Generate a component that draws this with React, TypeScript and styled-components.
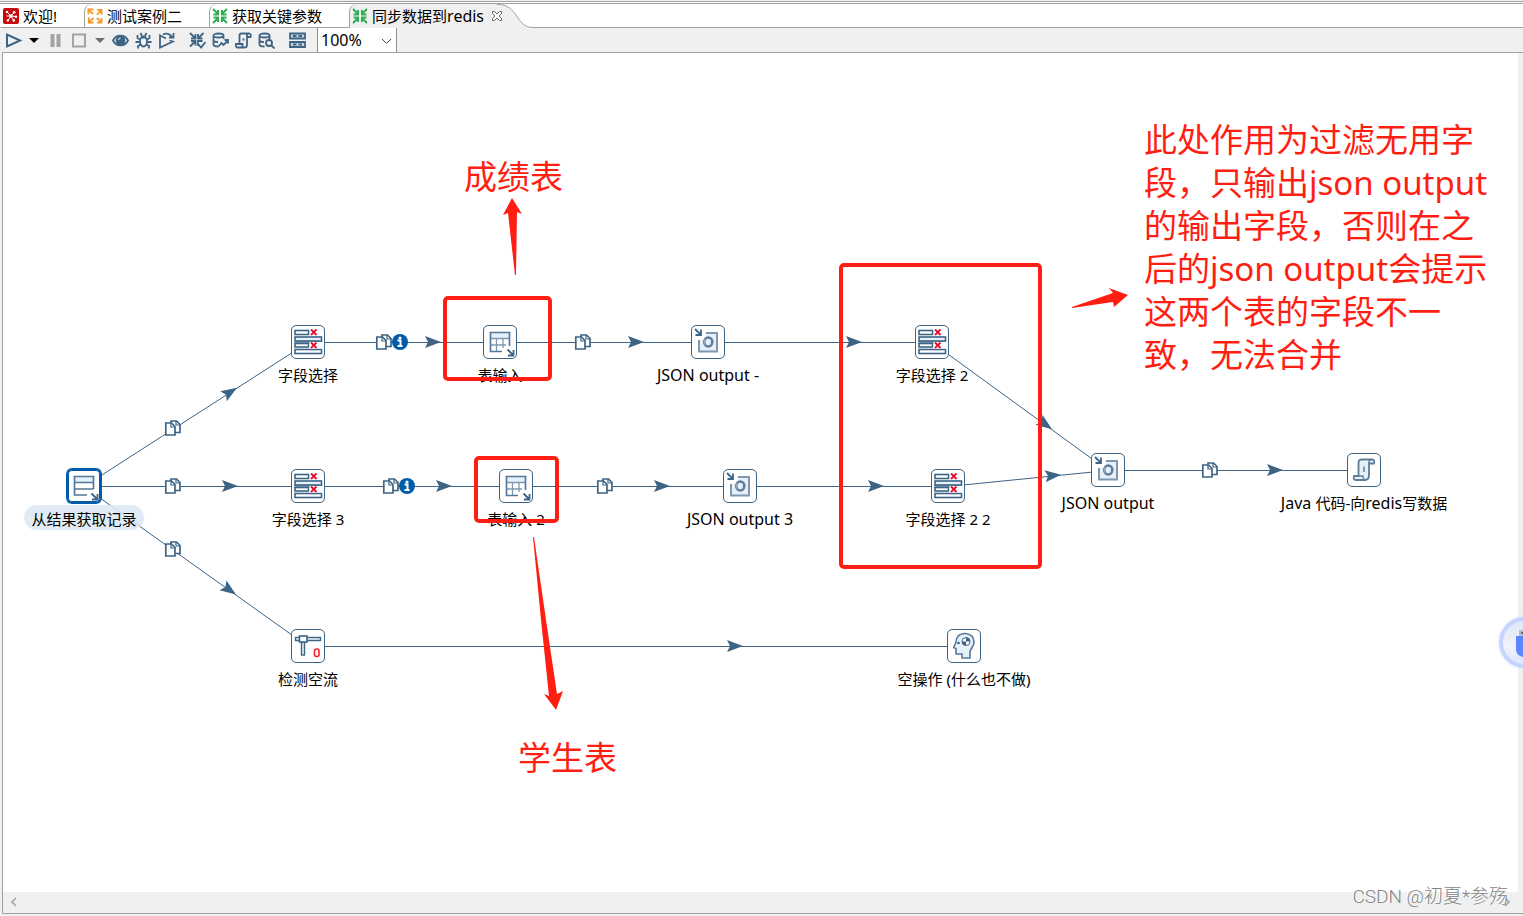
import React from "react";
import styled, { createGlobalStyle } from "styled-components";

const ink = "#3d6485";
const pale = "#e6f0f8";
const soft = "#7f9ab0";
const red = "#ff1e12";
const face = "#f0f0f0";
const rule = "#a0a0a5";

const GlobalStyle = createGlobalStyle`
  *, *::before, *::after { box-sizing: border-box; }
  body {
    margin: 0;
    background: ${face};
    color: #000;
    font-family: "Noto Sans", "Noto Sans CJK SC", sans-serif;
    font-size: 15px;
  }
  button, select { font: inherit; color: inherit; }
`;

/* ---------- window frame ---------- */

const Window = styled.div`
  position: relative;
  display: flex;
  flex-direction: column;
  min-height: 100vh;
  overflow: hidden;
  background: ${face};
`;

const TopEdge = styled.div`
  height: 3px;
  border-bottom: 1px solid #fff;
  background: linear-gradient(${face} 1px, ${rule} 1px);
`;

const TabStrip = styled.div`
  display: flex;
  height: 25px;
  background: #fff;
  border-top: 1px solid ${rule};
`;

const Tab = styled.button<{ $first?: boolean }>`
  display: flex;
  align-items: center;
  gap: 4px;
  height: 24px;
  padding: 0 27px 0 2px;
  border: 0;
  border-left: 1px solid ${(p) => (p.$first ? "transparent" : rule)};
  border-bottom: 1px solid ${rule};
  border-top-left-radius: ${(p) => (p.$first ? "0" : "8px")};
  background: #fff;
  line-height: 24px;
  white-space: nowrap;
`;

const ActiveTab = styled.div`
  display: flex;
  background: ${face};
  border-left: 1px solid ${rule};
  border-top-left-radius: 8px;
`;

const ActiveTabButton = styled(Tab)`
  padding-right: 7px;
  border: 0;
  background: none;
`;

const CloseButton = styled.button`
  display: flex;
  align-items: center;
  width: 12px;
  padding: 0;
  border: 0;
  background: none;
`;

const TabTail = styled.svg`
  display: block;
  margin-left: -6px;
  pointer-events: none;
`;

const StripRest = styled.div`
  flex: 1;
  border-bottom: 1px solid ${rule};
`;

const TailWrap = styled.div`
  display: flex;
  background: #fff;
`;

const Latin = styled.span`
  font-size: 16px;
`;

/* ---------- toolbar ---------- */

const Toolbar = styled.div`
  display: flex;
  align-items: stretch;
  height: 24px;
`;

const Group = styled.div`
  display: flex;
  margin-right: 8px;
`;

const RunGroup = styled(Group)`
  margin-right: 0;
`;

const ToolButton = styled.button<{ $w?: number }>`
  display: flex;
  align-items: center;
  justify-content: center;
  width: ${(p) => p.$w ?? 23}px;
  padding: 1px 0 0;
  border: 0;
  background: none;
`;

const ZoomBox = styled.label`
  position: relative;
  display: flex;
  width: 80px;
  border: 1px solid #8a8f96;
  border-width: 0 1px;
  background: #fff;
`;

const ZoomSelect = styled.select`
  flex: 1;
  padding: 0 0 0 3px;
  border: 0;
  appearance: none;
  background: none;
  font-size: 16px;
  line-height: 24px;
  outline: none;
`;

const ZoomArrow = styled.svg`
  position: absolute;
  right: 4px;
  top: 10px;
  pointer-events: none;
`;

/* ---------- work area ---------- */

const Work = styled.div`
  display: flex;
  flex: 1;
  flex-direction: column;
  margin: 0 0 2px 2px;
  border: 1px solid ${rule};
  border-right: 0;
`;

const CanvasRow = styled.div`
  display: flex;
  flex: 1;
`;

const Canvas = styled.main`
  position: relative;
  flex: 1;
  min-height: 680px;
  overflow: hidden;
  background: #fff;
`;

const SideScroll = styled.div`
  width: 5px;
  background: ${face};
`;

const BottomScroll = styled.div`
  display: flex;
  justify-content: space-between;
  height: 21px;
  padding: 0 12px 2px 7px;
  background: ${face};
`;

const ScrollButton = styled.button`
  display: flex;
  align-items: center;
  padding: 0;
  border: 0;
  background: none;
`;

const Drawing = styled.svg`
  position: absolute;
  inset: 0;
  width: 100%;
  height: 100%;
  pointer-events: none;
`;

const StepBox = styled.div<{ $x: number; $y: number }>`
  position: absolute;
  left: ${(p) => p.$x - 100}px;
  top: ${(p) => p.$y - 17}px;
  display: flex;
  flex-direction: column;
  align-items: center;
  gap: 2px;
  width: 200px;
`;

const StepIcon = styled.div<{ $selected?: boolean }>`
  width: 34px;
  height: 34px;
  border: 1px solid ${(p) => (p.$selected ? "#005ca8" : ink)};
  border-radius: 5px;
  background: #fff;
  box-shadow: ${(p) => (p.$selected ? "0 0 0 1px #005ca8, inset 0 0 0 1px #005ca8" : "none")};

  svg {
    display: block;
    margin: -1px;
  }
`;

const StepLabel = styled.div<{ $selected?: boolean }>`
  height: 25px;
  padding: 2px 7px 0;
  border-radius: 13px;
  background: ${(p) => (p.$selected ? "rgba(220, 232, 243, 0.86)" : "none")};
  line-height: 25px;
  white-space: nowrap;
`;

const Note = styled.p<{ $x: number; $y: number }>`
  position: absolute;
  left: ${(p) => p.$x}px;
  top: ${(p) => p.$y}px;
  margin: 0;
  color: ${red};
  font-size: 33px;
  line-height: 43px;
  white-space: nowrap;
`;

const Watermark = styled.div`
  position: absolute;
  right: 15px;
  bottom: 6px;
  color: #858585;
  font-family: Roboto, "Noto Sans CJK SC", sans-serif;
  font-size: 19px;
  font-weight: 300;
  line-height: 26px;
  text-shadow: -1px -1px 0 #fff;
  white-space: nowrap;
`;

const FloatBall = styled.button`
  position: absolute;
  right: -27px;
  top: 617px;
  width: 51px;
  height: 51px;
  padding: 0;
  border: 4px solid #c6d4fd;
  border-radius: 50%;
  background: linear-gradient(#e0e7fa, #f0f2fb 60%, #dce5ff);
  box-shadow: 0 0 3px #d6e0ff;
  overflow: hidden;

  svg { display: block; }
`;

/* ---------- small drawings ---------- */

const WelcomeIcon = () => (
  <svg width="16" height="16" viewBox="0 0 16 16">
    <rect width="16" height="16" rx="2" fill="#c9090d" />
    <path d="M8 8 4 4M8 8 11 4.500M8 8 13 8.500M8 8 10.500 12M8 8 5 12.500M8 8 3.500 8" stroke="#fff" strokeWidth="1" />
    <g fill="#fff">
      <circle cx="4" cy="4" r="1.300" />
      <circle cx="11.200" cy="4.200" r="1.300" />
      <circle cx="13" cy="8.700" r="1.200" />
      <circle cx="10.800" cy="12.400" r="1.300" />
      <circle cx="4.800" cy="12.400" r="1.200" />
      <circle cx="8" cy="8" r="1.700" />
    </g>
  </svg>
);

const JobIcon = () => (
  <svg width="16" height="16" viewBox="0 0 17 17" fill="none" stroke="#f59a23" strokeWidth="2">
    <path d="M1 6.500h5.500V1M6.500 6.500 1.500 1.500" transform="rotate(180 4 4)" />
    <path d="M10.500 2H15.500v5M15.500 2l-5 5M2 10v5.500h5M2 15.500l5-5M15.500 10.500v5h-5M15.500 15.500l-5-5" />
  </svg>
);

const TransIcon = () => (
  <svg width="16" height="16" viewBox="0 0 16 16" fill="none" stroke="#2fae54" strokeWidth="2">
    <path d="M1 1l5 5M6 2v4.500H1.500M15 1l-5 5M10 2v4.500h4.500M1 15l5-5M6 14V9.500H1.500M15 15l-5-5M10 14V9.500h4.500" />
  </svg>
);

const Tool = ({ children }: { children: React.ReactNode }) => (
  <svg width="17" height="17" viewBox="0 0 17 17" fill="none" stroke={ink} strokeWidth="1.800">
    {children}
  </svg>
);

const Caret = ({ color }: { color: string }) => (
  <svg width="10" height="5" viewBox="0 0 10 5">
    <path d="M0 0h10L5 5z" fill={color} />
  </svg>
);

const dbBody =
  "M1.500 3.500v9c0 1 2 2 5 2M1.500 3.500c0-1.200 2.300-2 5-2s5 .8 5 2-2.300 2-5 2-5-.8-5-2zM1.500 8c0 1 2 2 4.500 2M11.500 3.500V7";

/* ---------- step pictures, each in a 34 x 34 frame ---------- */

const Frame = ({ children }: { children: React.ReactNode }) => (
  <svg width="34" height="34" viewBox="0 0 34 34" fill="none" stroke={ink}>
    {children}
  </svg>
);

const OutArrow = ({ x, y }: { x: number; y: number }) => (
  <path d={`M${x} ${y}l5.500 5.500M${x + 6} ${y + 0.5}v5.500h-5.500`} strokeWidth="1.800" />
);

const SelectFields = () => (
  <Frame>
    <rect x="3.500" y="16" width="27" height="3" fill={soft} stroke="none" />
    <g strokeWidth="1.600">
      <rect x="4" y="5.500" width="13.500" height="4" fill="#fff" />
      <rect x="4" y="12" width="26.500" height="4" fill={pale} />
      <rect x="4" y="18.500" width="13.500" height="3.500" fill="#fff" />
      <rect x="4" y="24.500" width="26.500" height="4" fill="#fff" />
    </g>
    <rect x="18.500" y="17" width="13" height="6.500" fill="#fff" stroke="none" />
    <path d="M20 4.500l5.500 5.500M25.500 4.500l-5.500 5.500M20 17.500l5.500 5.500M25.500 17.500l-5.500 5.500" stroke="#e8112d" strokeWidth="1.900" />
  </Frame>
);

const TableInput = () => (
  <Frame>
    <rect x="7.500" y="7.500" width="19" height="6" fill={pale} stroke="none" />
    <path d="M7.500 13.500h19M7.500 20H23M13.500 13.500v13M20 13.500V23" stroke={soft} strokeWidth="1.300" />
    <path d="M19 26.500H7.500v-19h19V21" stroke="#56789a" strokeWidth="1.700" />
    <OutArrow x={24.500} y={24.500} />
  </Frame>
);

const ResultRows = () => (
  <Frame>
    <rect x="7.500" y="7.500" width="19" height="6" fill={pale} stroke="none" />
    <path d="M7.500 13.500h19M7.500 20h19" stroke="#56789a" strokeWidth="1.300" />
    <path d="M20 26H7.500V7.500h19V20" stroke="#56789a" strokeWidth="1.700" />
    <OutArrow x={24.500} y={24.500} />
  </Frame>
);

const JsonOutput = () => (
  <Frame>
    <path d="M8 14.500V26.500H26V8H15l-2 6.500z" fill={pale} stroke="none" />
    <path d="M8 15v11.500h18V8H15" stroke={soft} strokeWidth="2" />
    <ellipse cx="17.300" cy="17" rx="4" ry="4.500" stroke="#5f7d96" strokeWidth="2.600" />
    <path d="M15 13.800c-2 1.500-2 5 0 6.500" stroke="#a9bac8" strokeWidth="1" />
    <OutArrow x={4} y={4} />
  </Frame>
);

const JavaCode = () => (
  <Frame>
    <path
      d="M11.500 23V10q0-3.500 3.500-3.500h10.500q2.500.5 1.500 4h-5V22q0 5-4 5H8.500q-2.500-.5-1.500-4z"
      fill={pale}
      stroke="#5d7d98"
      strokeWidth="1.800"
    />
    <path d="M22 10.500q-.5-3 2.500-4M7 23h9q0 4 3 4" stroke="#5d7d98" strokeWidth="1.300" />
    <path d="M17 13.500v5.500" strokeWidth="1.200" />
  </Frame>
);

const DetectEmpty = () => (
  <Frame>
    <rect x="4.500" y="8.500" width="25" height="3" fill={pale} strokeWidth="1.400" />
    <rect x="10.500" y="13" width="3" height="13" fill={pale} strokeWidth="1.400" />
    <rect x="8.500" y="7" width="7.500" height="6" fill="#fff" strokeWidth="1.600" />
    <rect x="23.500" y="20" width="4.500" height="7.500" rx="2" stroke="#f0202c" strokeWidth="1.600" />
  </Frame>
);

const DoNothing = () => (
  <Frame>
    <path
      d="M23 29v-6c0-3 4-5 4-10 0-5-3.500-8.500-9-8.500-6 0-9 4-9 8.500l-2.300 5.500L9 19.500V25h6v4z"
      fill={pale}
      stroke="#56789a"
      strokeWidth="1.600"
    />
    <circle cx="19" cy="12.500" r="4" fill="#fff" strokeWidth="1" />
    <path d="M19 12.500v-4a4 4 0 0 1 4 4zM19 12.500v4a4 4 0 0 1-4-4z" fill={ink} stroke="none" />
    <circle cx="11.500" cy="14" r="1.300" fill={ink} stroke="none" />
  </Frame>
);

/* ---------- diagram data ---------- */

type Step = { label: string; x: number; y: number; Icon: () => React.JSX.Element; selected?: boolean };

const steps: Step[] = [
  { label: "从结果获取记录", x: 81, y: 433, Icon: ResultRows, selected: true },
  { label: "字段选择", x: 305, y: 289, Icon: SelectFields },
  { label: "字段选择 3", x: 305, y: 433, Icon: SelectFields },
  { label: "检测空流", x: 305, y: 593, Icon: DetectEmpty },
  { label: "表输入", x: 497, y: 289, Icon: TableInput },
  { label: "表输入 2", x: 513, y: 433, Icon: TableInput },
  { label: "JSON output -", x: 705, y: 289, Icon: JsonOutput },
  { label: "JSON output 3", x: 737, y: 433, Icon: JsonOutput },
  { label: "字段选择 2", x: 929, y: 289, Icon: SelectFields },
  { label: "字段选择 2 2", x: 945, y: 433, Icon: SelectFields },
  { label: "JSON output", x: 1105, y: 417, Icon: JsonOutput },
  { label: "Java 代码-向redis写数据", x: 1361, y: 417, Icon: JavaCode },
  { label: "空操作 (什么也不做)", x: 961, y: 593, Icon: DoNothing },
];

/* from, to, x of the arrow tip, x of the copy mark, whether an info mark follows it */
type Hop = { from: number; to: number; tip: number; copy?: number; info?: boolean };

const hops: Hop[] = [
  { from: 0, to: 1, tip: 234, copy: 170 },
  { from: 0, to: 2, tip: 235, copy: 170 },
  { from: 0, to: 3, tip: 233, copy: 170 },
  { from: 1, to: 4, tip: 438, copy: 381, info: true },
  { from: 4, to: 6, tip: 641, copy: 580 },
  { from: 6, to: 8, tip: 859 },
  { from: 2, to: 5, tip: 449, copy: 388, info: true },
  { from: 5, to: 7, tip: 667, copy: 602 },
  { from: 7, to: 9, tip: 881 },
  { from: 8, to: 10, tip: 1049 },
  { from: 9, to: 10, tip: 1058 },
  { from: 10, to: 11, tip: 1280, copy: 1207 },
  { from: 3, to: 12, tip: 740 },
];

const HopLine = ({ hop }: { hop: Hop }) => {
  const a = steps[hop.from];
  const b = steps[hop.to];
  const slope = (b.y - a.y) / (b.x - a.x);
  const at = (x: number) => a.y + slope * (x - a.x);
  const angle = (Math.atan(slope) * 180) / Math.PI;
  return (
    <g>
      <path d={`M${a.x} ${a.y + 0.5}L${b.x} ${b.y + 0.5}`} stroke={ink} strokeWidth="1" />
      <path
        d="M0 0-16-6-13 0-16 6z"
        fill={ink}
        transform={`translate(${hop.tip} ${at(hop.tip)}) rotate(${angle})`}
      />
      {hop.copy !== undefined && (
        <g transform={`translate(${hop.copy - 8} ${Math.floor(at(hop.copy)) - 8})`}>
          <path d="M6 1h5.500l3.500 3.500V12.500H6z" fill="#fff" stroke={ink} strokeWidth="1.700" />
          <path d="M11 1v4h4" fill="none" stroke={ink} strokeWidth="1.200" />
          <path d="M.8 3h5.700L10 6.500V15H.8z" fill="#fff" stroke={ink} strokeWidth="1.700" />
          <path d="M6 3v4h4" fill="none" stroke={ink} strokeWidth="1.200" />
        </g>
      )}
      {hop.info && (
        <g transform={`translate(${(hop.copy ?? 0) + 16} ${a.y})`}>
          <circle r="8" fill="#005ca8" />
          <path d="M-2.500-1.500H.5V4M-2.500 4h5" stroke="#fff" strokeWidth="2" fill="none" />
          <circle cy="-4" r="1.600" fill="#fff" />
        </g>
      )}
    </g>
  );
};

/* Latin words are set one size above the Chinese text beside them. */
const MixedText = ({ text }: { text: string }) => (
  <>
    {text.split(/([A-Za-z][A-Za-z0-9 -]*)/).map((part, i) => (i % 2 ? <Latin key={i}>{part}</Latin> : part))}
  </>
);

export default function App() {
  return (
    <Window>
      <GlobalStyle />
      <TopEdge />
      <TabStrip role="tablist">
        <Tab role="tab" $first>
          <WelcomeIcon />
          欢迎!
        </Tab>
        <Tab role="tab">
          <JobIcon />
          测试案例二
        </Tab>
        <Tab role="tab">
          <TransIcon />
          获取关键参数
        </Tab>
        <ActiveTab>
          <ActiveTabButton role="tab" aria-selected="true">
            <TransIcon />
            <span>
              <MixedText text="同步数据到redis" />
            </span>
          </ActiveTabButton>
          <CloseButton aria-label="关闭">
            <svg width="12" height="12" viewBox="0 0 12 12" fill="#fff" stroke="#6a6a6a">
              <path d="M1.500 1.500h2L6 4l2.500-2.500h2v2L8 6l2.500 2.500v2h-2L6 8l-2.500 2.500h-2v-2L4 6 1.500 3.500z" />
            </svg>
          </CloseButton>
        </ActiveTab>
        <TailWrap>
          <TabTail width="40" height="24" viewBox="0 0 40 24">
            <path d="M6 0C20 3 18 23 37 23.500H40V24H6z" fill={face} />
            <path d="M0 .5C22 0 18 23.500 36 23.500h4" fill="none" stroke={rule} />
          </TabTail>
        </TailWrap>
        <StripRest />
      </TabStrip>

      <Toolbar role="toolbar">
        <RunGroup>
          <ToolButton $w={26} aria-label="运行">
            <Tool>
              <path d="M2 2.500v12l13-6z" strokeWidth="2" />
            </Tool>
          </ToolButton>
          <ToolButton $w={16} aria-label="运行选项">
            <Caret color="#000" />
          </ToolButton>
          <ToolButton $w={26} aria-label="暂停">
            <Tool>
              <path d="M5.500 2v13M11.500 2v13" stroke="#a3a3a3" strokeWidth="4" />
            </Tool>
          </ToolButton>
          <ToolButton aria-label="停止">
            <Tool>
              <rect x="2" y="2.500" width="12" height="12" stroke="#a3a3a3" strokeWidth="2" />
            </Tool>
          </ToolButton>
          <ToolButton $w={18} aria-label="停止选项">
            <Caret color="#6f6f6f" />
          </ToolButton>
        </RunGroup>
        <Group>
          <ToolButton aria-label="预览">
            <Tool>
              <path d="M1 8.500C4 2 13 2 16 8.500 13 15 4 15 1 8.500z" />
              <circle cx="8.500" cy="8.500" r="4" fill={ink} />
              <path d="M6.500 8a2 2 0 0 1 2-2" stroke="#fff" strokeWidth="1" />
            </Tool>
          </ToolButton>
          <ToolButton aria-label="调试">
            <Tool>
              <ellipse cx="8.500" cy="9.500" rx="3.500" ry="5" />
              <path d="M6 5.500h5M5.500 1l1.500 3M11.500 1 10 4M5 7.500 2.500 6V3M12 7.500 14.500 6V3M5 10H.5M12 10h4.500M5.500 12.500 3 14v2.500M11.500 12.500 14 14v2.500" />
            </Tool>
          </ToolButton>
          <ToolButton aria-label="重放">
            <Tool>
              <path d="M11.500 8.500 15 9.500 2 15.500V3.500L8 6.500M5 2.500c3-1.500 7-1 9 2.500M15.500 1v4.500H11" />
            </Tool>
          </ToolButton>
        </Group>
        <Group>
          <ToolButton aria-label="校验">
            <Tool>
              <path d="M1 1l5 5M6.500 2v4.500H2M14.500 1l-5 5M9 2v4.500h4.500M1 14.500l5-5M6.500 13.500V9H2M9 14V9h4.500M9.500 12.500l2.500 3L16.500 10" />
            </Tool>
          </ToolButton>
          <ToolButton aria-label="影响分析">
            <Tool>
              <path d={dbBody} />
              <path d="M6.500 14.500 9.500 11l2 2L16 8.500M12.500 8H16v3.500" />
            </Tool>
          </ToolButton>
          <ToolButton aria-label="SQL">
            <Tool>
              <path d="M4.500 11.500v-8q0-2 2-2h8q2 .5 1 3.500h-3.500v8q0 2.500-2.500 2.500H2q-1.500-.5-1-3.500h6.500v3M12 5V1.500M7.500 7.500h2" />
            </Tool>
          </ToolButton>
          <ToolButton aria-label="浏览数据库">
            <Tool>
              <path d={dbBody} />
              <circle cx="11" cy="11" r="3" />
              <path d="M13 13l3.500 3.500" />
            </Tool>
          </ToolButton>
        </Group>
        <Group>
          <ToolButton aria-label="显示结果">
            <Tool>
              <path d="M1 1.500h15v5H1zM1 10h15v5H1z" fill="#c9d6e0" />
              <path d="M4 4h3.500M9.500 4H13M4 12.500h3.500M9.500 12.500H13" />
            </Tool>
          </ToolButton>
        </Group>
        <ZoomBox>
          <ZoomSelect aria-label="缩放" defaultValue="100%">
            <option>200%</option>
            <option>100%</option>
            <option>50%</option>
          </ZoomSelect>
          <ZoomArrow width="11" height="7" viewBox="0 0 11 7" fill="none" stroke="#444">
            <path d="M1 1l4.500 4.500L10 1" />
          </ZoomArrow>
        </ZoomBox>
      </Toolbar>

      <Work>
        <CanvasRow>
          <Canvas>
            <Drawing>
              {hops.map((hop) => (
                <HopLine key={`${hop.from}-${hop.to}`} hop={hop} />
              ))}
            </Drawing>
            {steps.map(({ label, x, y, Icon, selected }) => (
              <StepBox key={label} $x={x} $y={y}>
                <StepIcon $selected={selected}>
                  <Icon />
                </StepIcon>
                <StepLabel $selected={selected}>
                  <MixedText text={label} />
                </StepLabel>
              </StepBox>
            ))}
            <Drawing>
              <g fill="none" stroke={red} strokeWidth="4">
                <rect x="442" y="245" width="105" height="81" rx="3" />
                <rect x="473" y="405" width="81" height="63" rx="3" />
                <rect x="838" y="212" width="199" height="302" rx="3" />
              </g>
              <g fill={red}>
                <path d="M509 145l10 16-5-2-1 63h-1l-7-62-5 2z" />
                <path d="M530 484h1l12 83 11 74 6-3-7 19-12-16 5 2-8-76z" />
                <path d="M1069 255v-1l41-14-4-5 19 7-14 12-1-5z" />
              </g>
            </Drawing>
            <Note $x={461} $y={102}>
              成绩表
            </Note>
            <Note $x={515} $y={683}>
              学生表
            </Note>
            <Note $x={1141} $y={65}>
              此处作用为过滤无用字
              <br />
              段，只输出json output
              <br />
              的输出字段，否则在之
              <br />
              后的json output会提示
              <br />
              这两个表的字段不一
              <br />
              致，无法合并
            </Note>
          </Canvas>
          <SideScroll />
        </CanvasRow>
        <BottomScroll>
          <ScrollButton aria-label="向左滚动">
            <svg width="8" height="10" viewBox="0 0 8 10" fill="none" stroke="#a0a0a0" strokeWidth="1.500">
              <path d="M6 1 2 5l4 4" />
            </svg>
          </ScrollButton>
          <ScrollButton aria-label="向右滚动">
            <svg width="8" height="10" viewBox="0 0 8 10" fill="none" stroke="#a0a0a0" strokeWidth="1.500">
              <path d="M2 1l4 4-4 4" />
            </svg>
          </ScrollButton>
        </BottomScroll>
      </Work>

      <Watermark>CSDN @初夏*参殇</Watermark>
      <FloatBall aria-label="悬浮助手">
        <svg width="43" height="43" viewBox="0 0 43 43">
          <rect x="16" y="9" width="12" height="7" fill="#b9bcc4" />
          <rect x="18" y="11" width="2" height="2" fill="#6c6f78" />
          <path d="M13 15h18v13q0 8-9 8t-9-8z" fill="#5b86ff" />
        </svg>
      </FloatBall>
    </Window>
  );
}
